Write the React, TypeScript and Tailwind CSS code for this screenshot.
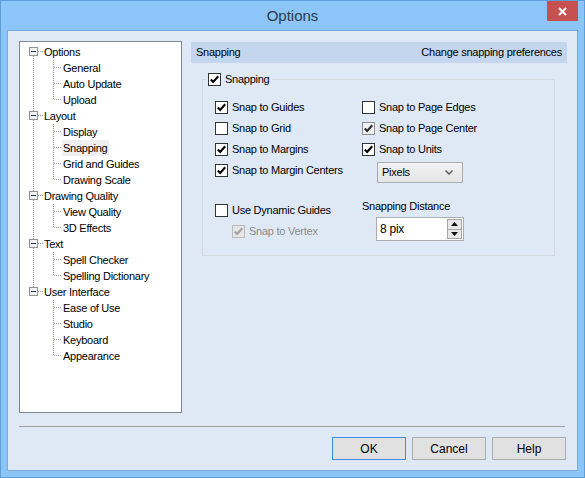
import React from 'react'

const FONT = { fontFamily: '"Liberation Sans", Arial, sans-serif' }

interface Group { label: string; children: string[] }

const TREE: Group[] = [
  { label: 'Options', children: ['General', 'Auto Update', 'Upload'] },
  { label: 'Layout', children: ['Display', 'Snapping', 'Grid and Guides', 'Drawing Scale'] },
  { label: 'Drawing Quality', children: ['View Quality', '3D Effects'] },
  { label: 'Text', children: ['Spell Checker', 'Spelling Dictionary'] },
  { label: 'User Interface', children: ['Ease of Use', 'Studio', 'Keyboard', 'Appearance'] },
]

const DOT = { stroke: '#9a9a9a', strokeWidth: 1, strokeDasharray: '1 1', shapeRendering: 'crispEdges' as const }

function GroupLines({ first, last }: { first: boolean; last: boolean }) {
  return (
    <svg width="24" height="16" className="shrink-0">
      {!first && <line x1="13.5" y1="0" x2="13.5" y2="3" {...DOT} />}
      {!last && <line x1="13.5" y1="12" x2="13.5" y2="16" {...DOT} />}
      <line x1="18" y1="7.5" x2="24" y2="7.5" {...DOT} />
      <rect x="9.5" y="3.5" width="8" height="8" fill="#f4f4f4" stroke="#919191" shapeRendering="crispEdges" />
      <line x1="11" y1="7.5" x2="16" y2="7.5" stroke="#1f3a5c" strokeWidth="1" shapeRendering="crispEdges" />
    </svg>
  )
}

function ChildLines({ parentLast, last }: { parentLast: boolean; last: boolean }) {
  return (
    <svg width="42" height="16" className="shrink-0">
      {!parentLast && <line x1="13.5" y1="0" x2="13.5" y2="16" {...DOT} />}
      <line x1="33.5" y1="0" x2="33.5" y2={last ? 8 : 16} {...DOT} />
      <line x1="34" y1="7.5" x2="42" y2="7.5" {...DOT} />
    </svg>
  )
}

function Tree() {
  return (
    <div className="w-[163px] h-[372px] shrink-0 bg-white border border-[#828790] pt-[2px] text-[11px] tracking-[-0.25px] text-black">
      {TREE.map((g, gi) => (
        <div key={g.label}>
          <div className="h-[16px] flex items-center">
            <GroupLines first={gi === 0} last={gi === TREE.length - 1} />
            <span className="px-[1px] -ml-[1px] leading-[16px]">{g.label}</span>
          </div>
          {g.children.map((c, ci) => (
            <div key={c} className="h-[16px] flex items-center">
              <ChildLines parentLast={gi === TREE.length - 1} last={ci === g.children.length - 1} />
              <span className={`px-[1px] leading-[16px] ${c === 'Snapping' ? 'bg-[#f0f0f0]' : ''}`}>{c}</span>
            </div>
          ))}
        </div>
      ))}
    </div>
  )
}

function Check({ checked, state = 'normal' }: { checked: boolean; state?: 'normal' | 'hover' | 'disabled' }) {
  const box =
    state === 'disabled'
      ? 'border-[#bcbcbc] bg-[#e6e6e6]'
      : state === 'hover'
        ? 'border-[#8f8f8f] bg-[#f3f3f3]'
        : 'border-[#333333] bg-white'
  const mark = state === 'disabled' ? '#a2a2a2' : state === 'hover' ? '#2a2a2a' : '#000000'
  return (
    <span className={`w-[13px] h-[13px] shrink-0 border ${box} flex items-center justify-center`}>
      {checked && (
        <svg width="11" height="11" viewBox="0 0 11 11">
          <polyline points="1.8,5.4 4.2,7.9 9.2,2.2" fill="none" stroke={mark} strokeWidth="2.1" />
        </svg>
      )}
    </span>
  )
}

function CheckRow({ label, checked, state }: { label: string; checked: boolean; state?: 'normal' | 'hover' | 'disabled' }) {
  return (
    <div className="h-[21px] flex items-center gap-[4px]">
      <Check checked={checked} state={state} />
      <span className={state === 'disabled' ? 'text-[#8b8b8b]' : 'text-black'}>{label}</span>
    </div>
  )
}

function Button({ label, primary }: { label: string; primary?: boolean }) {
  return (
    <button
      className={`w-[74px] h-[23px] border ${primary ? 'border-[#3a8ee6]' : 'border-[#adadad]'} bg-[#e1e1e1] text-[12px] text-black flex items-center justify-center`}
    >
      {label}
    </button>
  )
}

export default function App() {
  return (
    <div style={FONT} className="w-[585px] h-[478px] border border-[#5f9dd6] bg-[#8cc6f8] flex flex-col px-[6px] pb-[6px]">
      {/* title bar */}
      <div className="h-[29px] grid grid-cols-[1fr_auto_1fr] items-start">
        <div />
        <div className="text-[15px] leading-[29px] text-[#2e3a46]">Options</div>
        <div className="flex justify-end">
          <div className="w-[31px] h-[20px] bg-[#c75050] flex items-center justify-center">
            <svg width="9" height="9" viewBox="0 0 9 9">
              <path d="M1 1 L8 8 M8 1 L1 8" stroke="white" strokeWidth="1.8" />
            </svg>
          </div>
        </div>
      </div>

      {/* client area */}
      <div className="flex-1 border border-[#79acdd] bg-[#dfe9f5] flex flex-col pl-[11px] pr-[10px] pt-[10px] text-[11px] tracking-[-0.25px]">
        <div className="flex gap-[9px]">
          <Tree />

          <div className="flex-1 mt-[1px] flex flex-col">
            <div className="h-[21px] bg-[#c3d6ed] flex items-center justify-between pl-[5px] pr-[5px] text-[11px] text-black">
              <span>Snapping</span>
              <span>Change snapping preferences</span>
            </div>

            <fieldset className="mt-[9px] ml-[11px] mr-[12px] border border-[#d3d9df]">
              <legend className="ml-[3px] px-[2px] h-[14px] flex items-center gap-[4px]">
                <Check checked />
                <span>Snapping</span>
              </legend>
              <div className="pt-[11px] pl-[12px] pb-[13px]">
                <div className="grid grid-cols-[147px_1fr]">
                  <CheckRow label="Snap to Guides" checked />
                  <CheckRow label="Snap to Page Edges" checked={false} />
                  <CheckRow label="Snap to Grid" checked={false} />
                  <CheckRow label="Snap to Page Center" checked state="hover" />
                  <CheckRow label="Snap to Margins" checked />
                  <CheckRow label="Snap to Units" checked />
                  <CheckRow label="Snap to Margin Centers" checked />
                  <div className="h-[21px] pt-[2px] pl-[15px]">
                    <div className="w-[86px] h-[21px] border border-[#acacac] bg-gradient-to-b from-[#f2f2f2] to-[#e5e5e5] flex items-center justify-between pl-[4px] pr-[9px]">
                      <span>Pixels</span>
                      <svg width="8" height="5" viewBox="0 0 8 5">
                        <polyline points="0.5,0.5 4,4 7.5,0.5" fill="none" stroke="#555" strokeWidth="1.4" />
                      </svg>
                    </div>
                  </div>
                </div>

                <div className="mt-[18px] flex items-start">
                  <div className="w-[147px] pt-[1px]">
                    <CheckRow label="Use Dynamic Guides" checked={false} />
                    <div className="pl-[17px]">
                      <CheckRow label="Snap to Vertex" checked state="disabled" />
                    </div>
                  </div>
                  <div>
                    <div className="h-[14px] leading-[14px]">Snapping Distance</div>
                    <div className="mt-[4px] ml-[14px] w-[88px] h-[24px] border border-[#abadb3] bg-white flex">
                      <div className="flex-1 flex items-center pl-[3px] text-[12px]">8 pix</div>
                      <div className="w-[17px] flex flex-col p-[1px] gap-0">
                        <div className="flex-1 border border-[#a5a5a5] bg-[#e8e8e8] flex items-center justify-center">
                          <svg width="7" height="4" viewBox="0 0 7 4">
                            <polygon points="3.5,0 7,4 0,4" fill="#111" />
                          </svg>
                        </div>
                        <div className="flex-1 border border-t-0 border-[#a5a5a5] bg-[#e8e8e8] flex items-center justify-center">
                          <svg width="7" height="4" viewBox="0 0 7 4">
                            <polygon points="0,0 7,0 3.5,4" fill="#111" />
                          </svg>
                        </div>
                      </div>
                    </div>
                  </div>
                </div>
              </div>
            </fieldset>
          </div>
        </div>

        <div className="mt-[13px] mr-[2px] border-t border-[#a0a0a0]" />

        <div className="mt-[10px] mr-[1px] flex justify-end gap-[6px] tracking-normal">
          <Button label="OK" primary />
          <Button label="Cancel" />
          <Button label="Help" />
        </div>
      </div>
    </div>
  )
}
